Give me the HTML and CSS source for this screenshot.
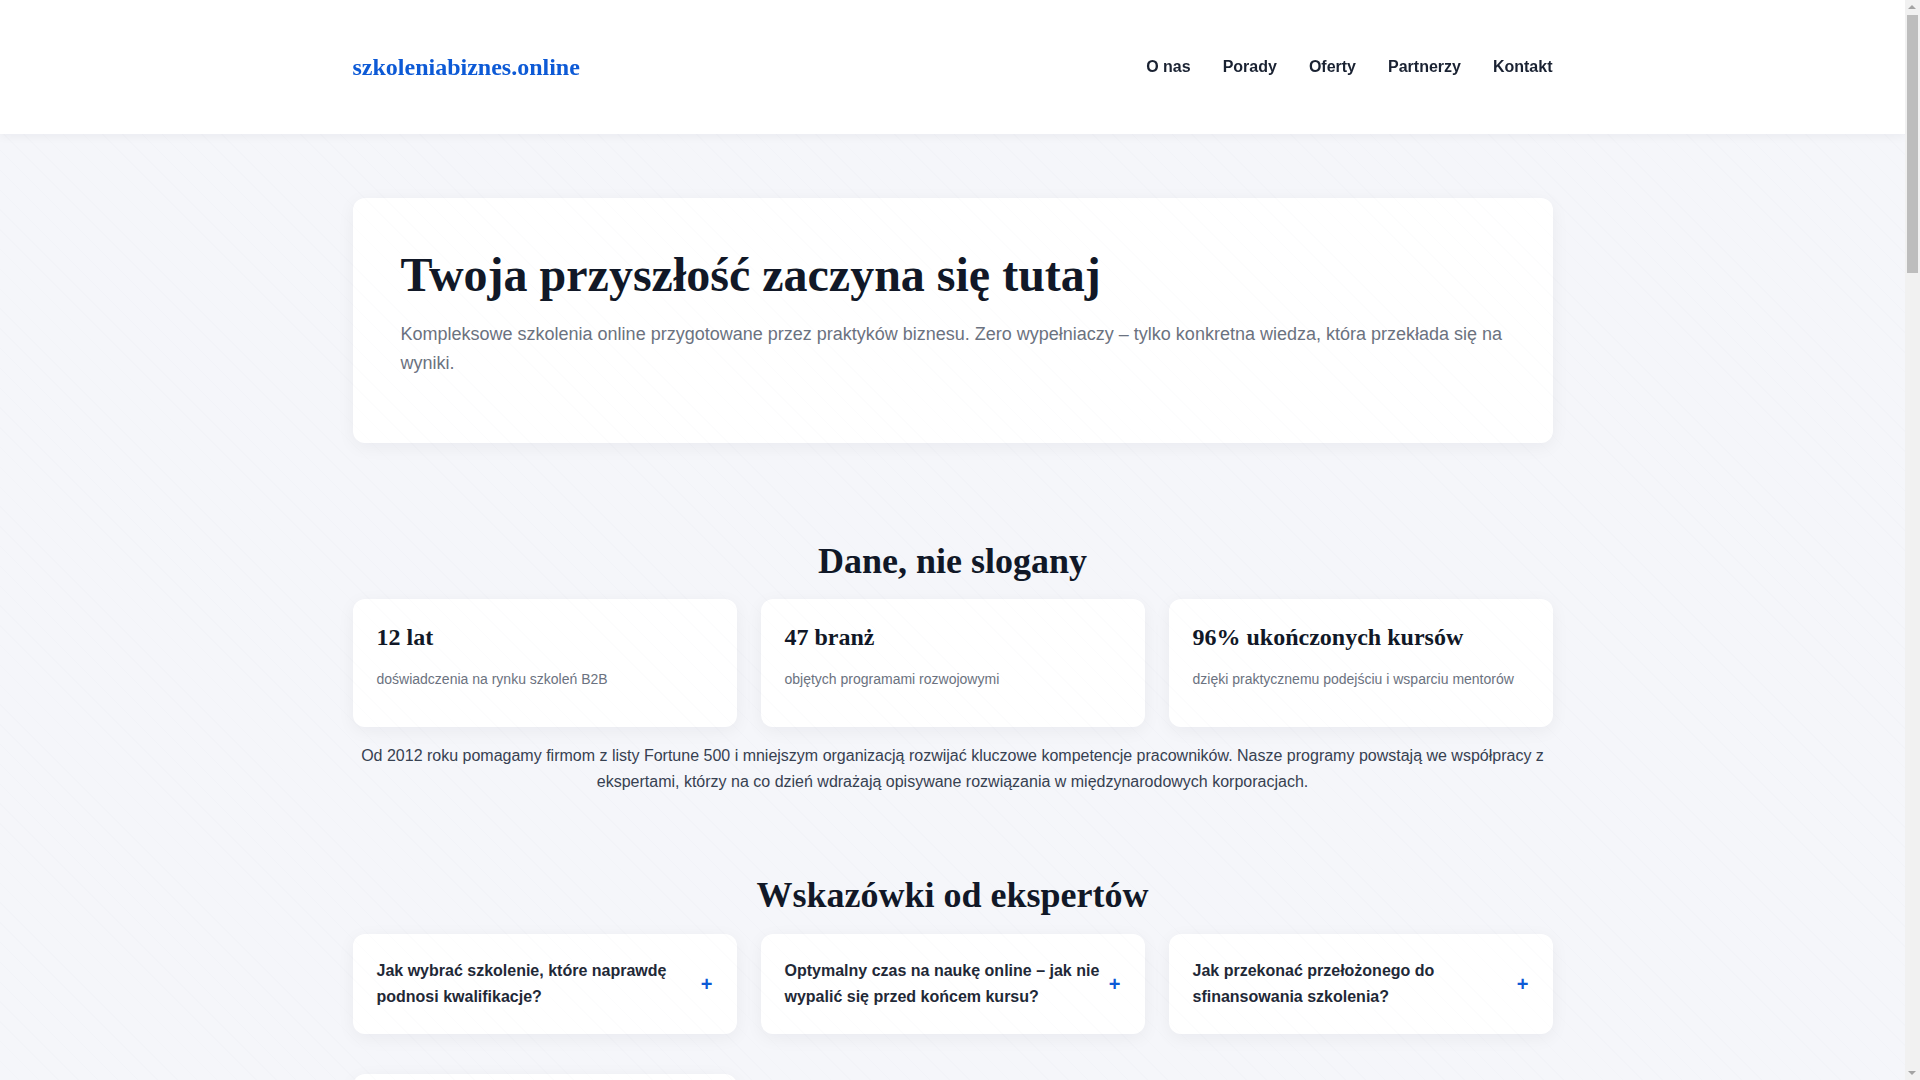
FILE: index.html
```html
<!DOCTYPE html>
<html lang="pl">
<head>
<meta charset="utf-8">
<title>szkoleniabiznes.online – szkolenia online dla biznesu</title>
<link rel="stylesheet" href="styles.css">
</head>
<body>
<div class="page">
  <header class="site-header">
    <div class="container header-inner">
      <a class="logo" href="#">szkoleniabiznes.online</a>
      <nav class="main-nav">
        <a href="#o-nas">O nas</a>
        <a href="#porady">Porady</a>
        <a href="#oferty">Oferty</a>
        <a href="#partnerzy">Partnerzy</a>
        <a href="#kontakt">Kontakt</a>
      </nav>
    </div>
  </header>

  <main class="container main">
    <section class="hero">
      <h1 class="hero-title">Twoja przyszłość zaczyna się tutaj</h1>
      <p class="hero-lead">Kompleksowe szkolenia online przygotowane przez praktyków biznesu. Zero wypełniaczy – tylko konkretna wiedza, która przekłada się na wyniki.</p>
    </section>

    <section class="stats" id="o-nas">
      <h2 class="section-title">Dane, nie slogany</h2>
      <div class="card-grid">
        <div class="card stat-card">
          <h3 class="stat-value">12 lat</h3>
          <p class="stat-label">doświadczenia na rynku szkoleń B2B</p>
        </div>
        <div class="card stat-card">
          <h3 class="stat-value">47 branż</h3>
          <p class="stat-label">objętych programami rozwojowymi</p>
        </div>
        <div class="card stat-card">
          <h3 class="stat-value">96% ukończonych kursów</h3>
          <p class="stat-label">dzięki praktycznemu podejściu i wsparciu mentorów</p>
        </div>
      </div>
      <p class="about-text">Od 2012 roku pomagamy firmom z listy Fortune 500 i mniejszym organizacją rozwijać kluczowe kompetencje pracowników. Nasze programy powstają we współpracy z ekspertami, którzy na co dzień wdrażają opisywane rozwiązania w międzynarodowych korporacjach.</p>
    </section>

    <section class="tips" id="porady">
      <h2 class="section-title tips-title">Wskazówki od ekspertów</h2>
      <div class="card-grid tip-grid">
        <div class="card tip-card">
          <span class="tip-question">Jak wybrać szkolenie, które naprawdę podnosi kwalifikacje?</span>
          <span class="tip-toggle">+</span>
        </div>
        <div class="card tip-card">
          <span class="tip-question">Optymalny czas na naukę online – jak nie wypalić się przed końcem kursu?</span>
          <span class="tip-toggle">+</span>
        </div>
        <div class="card tip-card">
          <span class="tip-question">Jak przekonać przełożonego do sfinansowania szkolenia?</span>
          <span class="tip-toggle">+</span>
        </div>
        <div class="card tip-card">
          <span class="tip-question">Certyfikat czy umiejętności – co liczy się bardziej?</span>
          <span class="tip-toggle">+</span>
        </div>
      </div>
    </section>

    <section class="extra" id="oferty">
      <h2 class="section-title">Oferty</h2>
      <div class="card-grid">
        <div class="card stat-card">
          <h3 class="stat-value">Zarządzanie zespołem</h3>
          <p class="stat-label">program dla nowych liderów</p>
        </div>
        <div class="card stat-card">
          <h3 class="stat-value">Negocjacje B2B</h3>
          <p class="stat-label">warsztaty z praktykami sprzedaży</p>
        </div>
        <div class="card stat-card">
          <h3 class="stat-value">Analiza danych</h3>
          <p class="stat-label">od arkusza do decyzji biznesowych</p>
        </div>
      </div>
    </section>

    <section class="extra" id="partnerzy">
      <h2 class="section-title">Partnerzy</h2>
      <p class="about-text">Współpracujemy z uczelniami biznesowymi i firmami doradczymi w całej Europie.</p>
    </section>

    <section class="extra" id="kontakt">
      <h2 class="section-title">Kontakt</h2>
      <p class="about-text">Napisz do nas: kontakt@szkoleniabiznes.online</p>
    </section>
  </main>

  <footer class="site-footer">
    <div class="container">© szkoleniabiznes.online</div>
  </footer>
</div>

<!-- classic window scrollbar along the right edge -->
<div class="scrollbar" aria-hidden="true">
  <span class="scroll-arrow scroll-arrow-up"></span>
  <span class="scroll-thumb"></span>
  <span class="scroll-arrow scroll-arrow-down"></span>
</div>
</body>
</html>
```

FILE: styles.css
```css
* {
  box-sizing: border-box;
}

html,
body {
  margin: 0;
  padding: 0;
}

body {
  font-family: "Liberation Sans", Arial, sans-serif;
  color: #1f2937;
  background-color: #f5f6fa;
  padding-right: 15px;
}

/* faint diagonal hatching laid over the page content */
body::after {
  content: "";
  position: fixed;
  inset: 0;
  pointer-events: none;
  background-image: repeating-linear-gradient(
    45deg,
    rgba(40, 50, 90, 0) 0,
    rgba(40, 50, 90, 0) 13px,
    rgba(40, 50, 90, 0.012) 13px,
    rgba(40, 50, 90, 0.012) 14px
  );
  z-index: 10;
}

.page {
  display: flex;
  flex-direction: column;
  min-height: 4395px;
}

.container {
  width: 100%;
  max-width: 1200px;
  margin: 0 auto;
}

/* header */
.site-header {
  background: #ffffff;
  height: 134px;
  box-shadow: 0 2px 10px rgba(17, 24, 39, 0.05);
  position: relative;
  z-index: 20;
}

.header-inner {
  height: 100%;
  display: flex;
  align-items: center;
  justify-content: space-between;
}

.logo {
  font-family: "Liberation Serif", "Times New Roman", serif;
  font-weight: 700;
  font-size: 24px;
  color: #0d5ad6;
  text-decoration: none;
}

.main-nav {
  display: flex;
  gap: 32px;
}

.main-nav a {
  font-size: 16px;
  font-weight: 700;
  color: #1a2232;
  text-decoration: none;
}

/* main */
.main {
  flex: 1;
  padding-top: 64px;
}

.card {
  background: #ffffff;
  border-radius: 12px;
  box-shadow: 0 4px 18px rgba(17, 24, 39, 0.05);
}

.hero {
  background: #ffffff;
  border-radius: 12px;
  box-shadow: 0 4px 18px rgba(17, 24, 39, 0.05);
  padding: 48px 48px 48px;
}

.hero-title {
  font-family: "Liberation Serif", "Times New Roman", serif;
  font-weight: 700;
  font-size: 48px;
  line-height: 1.2;
  color: #111827;
  margin: 0 0 16px;
}

.hero-lead {
  font-size: 18px;
  line-height: 1.65;
  color: #6b7280;
  margin: 0 0 16px;
}

.section-title {
  font-family: "Liberation Serif", "Times New Roman", serif;
  font-weight: 700;
  font-size: 36px;
  line-height: 1.2;
  color: #111827;
  text-align: center;
  margin: 0 0 16px;
}

.stats {
  margin-top: 97px;
}

.card-grid {
  display: grid;
  grid-template-columns: repeat(3, 1fr);
  gap: 24px;
}

.stat-card {
  padding: 24px 24px 37px;
}

.stat-value {
  font-family: "Liberation Serif", "Times New Roman", serif;
  font-weight: 700;
  font-size: 24px;
  line-height: 1.2;
  color: #111827;
  margin: 0 0 17px;
}

.stat-label {
  font-size: 14px;
  line-height: 1.5;
  color: #6b7280;
  margin: 0;
}

.about-text {
  font-size: 16px;
  line-height: 1.6;
  color: #374151;
  text-align: center;
  margin: 16px 0 0;
}

.tips {
  margin-top: 80px;
}

.tips-title {
  margin-bottom: 17px;
}

.tip-grid {
  row-gap: 40px;
}

.tip-card {
  display: flex;
  align-items: center;
  justify-content: space-between;
  gap: 8px;
  padding: 24px;
}

.tip-question {
  font-size: 16px;
  font-weight: 700;
  line-height: 1.6;
  color: #1f2937;
}

.tip-toggle {
  flex: none;
  font-size: 20px;
  font-weight: 700;
  line-height: 1;
  color: #0d5ad6;
}

.extra {
  margin-top: 96px;
}

.site-footer {
  background: #ffffff;
  padding: 32px 0;
  margin-top: 96px;
  font-size: 14px;
  color: #6b7280;
}

/* window scrollbar */
.scrollbar {
  position: fixed;
  top: 0;
  right: 0;
  bottom: 0;
  width: 15px;
  background: #f1f1f1;
  z-index: 30;
}

.scroll-thumb {
  position: absolute;
  top: 15px;
  left: 2px;
  width: 11px;
  height: 258px;
  background: #bdbdbd;
}

.scroll-arrow {
  position: absolute;
  left: 3px;
  width: 0;
  height: 0;
  border-left: 4.5px solid transparent;
  border-right: 4.5px solid transparent;
}

.scroll-arrow-up {
  top: 5px;
  border-bottom: 4px solid #a3a3a3;
}

.scroll-arrow-down {
  bottom: 5px;
  border-top: 4px solid #a3a3a3;
}
```
